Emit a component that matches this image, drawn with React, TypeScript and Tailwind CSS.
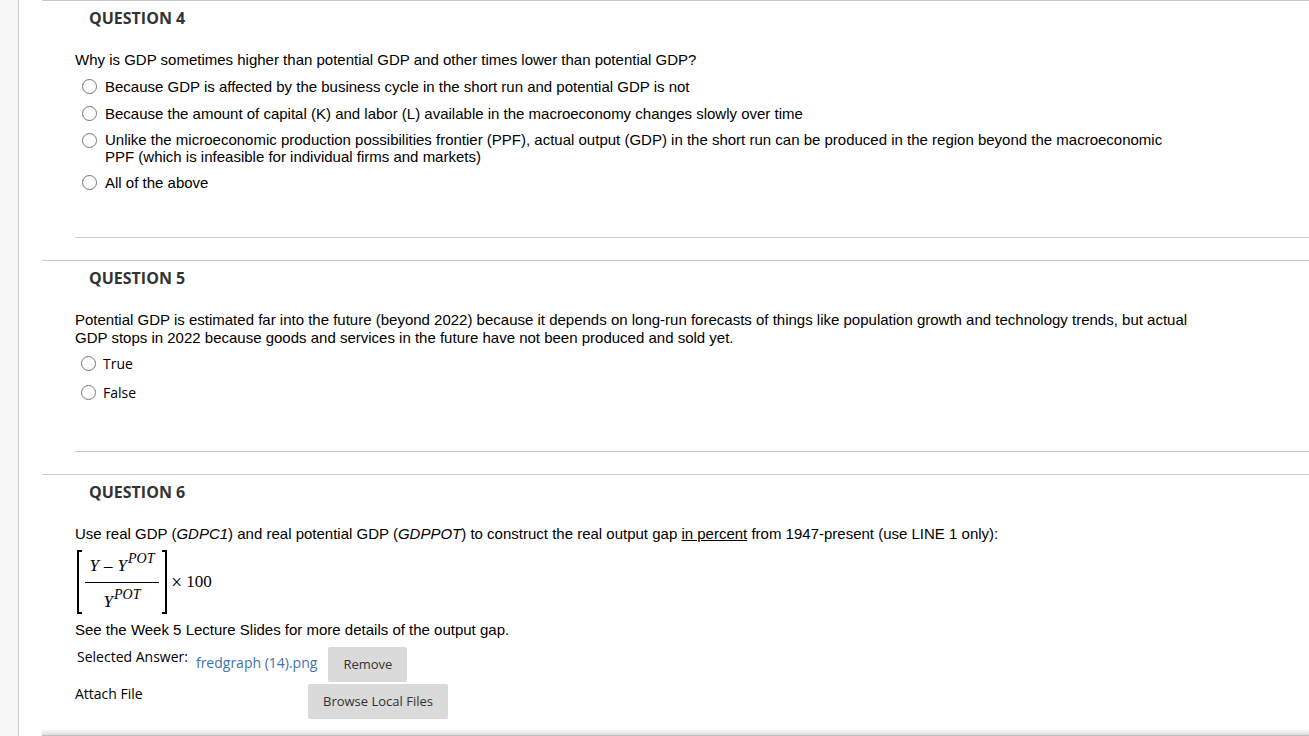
import type { ReactNode } from "react";

const Y_POT = (
  <span className="inline-flex items-start gap-px italic">
    <span className="mt-[5px]">Y</span>
    <span className="text-[14px] leading-4">POT</span>
  </span>
);

interface QuestionProps {
  number: number;
  children: ReactNode;
}

const Question = ({ number, children }: QuestionProps) => (
  <section className="border-t border-[#c9c9c9] pt-[5px]">
    <h3 className="pl-[47px] font-['Open_Sans',sans-serif] text-[16px] leading-6 font-bold text-[#333]">
      QUESTION {number}
    </h3>
    <div className="pt-[21px] pl-[33px]">{children}</div>
  </section>
);

const Prompt = ({ children }: { children: ReactNode }) => (
  <p className="pr-[118px] leading-[18px]">{children}</p>
);

const Divider = () => <hr className="mb-[22px] border-[#c9c9c9]" />;

const RADIO =
  "size-[15px] shrink-0 appearance-none rounded-full border border-[#767676] bg-white checked:border-4 checked:border-[#0075ff]";

const CHOICES = [
  "Because GDP is affected by the business cycle in the short run and potential GDP is not",
  "Because the amount of capital (K) and labor (L) available in the macroeconomy changes slowly over time",
  "Unlike the microeconomic production possibilities frontier (PPF), actual output (GDP) in the short run can be produced in the region beyond the macroeconomic PPF (which is infeasible for individual firms and markets)",
  "All of the above",
];

const BUTTON =
  "h-[35px] rounded-xs bg-[#dadada] px-[15px] pb-[2px] font-['Open_Sans',sans-serif] text-[13px] text-[#333] hover:bg-[#cdcdcd]";

const OutputGapFormula = () => (
  <div className="mt-[7px] flex h-[64px] items-center font-['Liberation_Serif',serif] text-[17px] leading-5">
    <div className="ml-[2px] w-[5px] self-stretch border-y-2 border-l-2 border-black" />
    <div className="mx-[3px] flex w-[74px] flex-col items-center">
      <div className="flex h-[32px] w-full items-start justify-center gap-[5px] border-b border-black">
        <span className="mt-[5px] italic">Y</span>
        <span className="mt-[5px]">–</span>
        {Y_POT}
      </div>
      <div className="flex h-[31px] items-start pt-1">{Y_POT}</div>
    </div>
    <div className="w-[5px] self-stretch border-y-2 border-r-2 border-black" />
    <span className="ml-1 flex items-center gap-1">
      <span className="text-[20px]">×</span>
      <span>100</span>
    </span>
  </div>
);

export default function App() {
  return (
    <div className="flex min-h-screen bg-white font-['Liberation_Sans',Arial,sans-serif] text-[15px] text-black">
      <div className="w-[19px] shrink-0 border-r border-[#c9c9c9] bg-[#f7f7f7]" />

      <main className="min-w-0 flex-1 pl-[23px]">
        <Question number={4}>
          <Prompt>
            Why is GDP sometimes higher than potential GDP and other times lower than potential GDP?
          </Prompt>
          <fieldset className="mt-1 mb-[41px] pr-[118px] pl-[7px]">
            {CHOICES.map((choice, i) => (
              <div key={choice} className="flex min-h-[27px] gap-2 py-1">
                <input id={`q4-${i}`} type="radio" name="q4" className={`mt-[2px] ${RADIO}`} />
                <label htmlFor={`q4-${i}`} className="self-center leading-[17px]">
                  {choice}
                </label>
              </div>
            ))}
          </fieldset>
          <Divider />
        </Question>

        <Question number={5}>
          <Prompt>
            Potential GDP is estimated far into the future (beyond 2022) because it depends on
            long-run forecasts of things like population growth and technology trends, but actual
            GDP stops in 2022 because goods and services in the future have not been produced and
            sold yet.
          </Prompt>
          <fieldset className="mt-[2px] mb-11 pl-[6px] font-['Open_Sans',sans-serif] text-[14px]">
            {["True", "False"].map((choice) => (
              <div key={choice} className="flex h-[29px] items-center gap-[7px]">
                <input id={`q5-${choice}`} type="radio" name="q5" className={RADIO} />
                <label htmlFor={`q5-${choice}`}>{choice}</label>
              </div>
            ))}
          </fieldset>
          <Divider />
        </Question>

        <Question number={6}>
          <Prompt>
            Use real GDP (<em>GDPC1</em>) and real potential GDP (<em>GDPPOT</em>) to construct the
            real output gap <u>in percent</u> from 1947-present (use LINE 1 only):
          </Prompt>
          <OutputGapFormula />
          <div className="mt-[7px]">
            <Prompt>See the Week 5 Lecture Slides for more details of the output gap.</Prompt>
          </div>

          <div className="mt-2 font-['Open_Sans',sans-serif] text-[14px] leading-5">
            <div className="flex pl-[2px]">
              <span>Selected Answer:</span>
              <a href="#fredgraph" className="mt-[6px] ml-2 text-[#3f73ad] hover:underline">
                fredgraph (14).png
              </a>
              <button type="button" className={`ml-[11px] ${BUTTON}`}>
                Remove
              </button>
            </div>
            <div className="mt-[2px] flex">
              <span className="w-[233px]">Attach File</span>
              <button type="button" className={BUTTON}>
                Browse Local Files
              </button>
            </div>
          </div>
        </Question>

        <div className="mt-[10px] h-[7px] border-b border-[#c0c0c0] bg-linear-to-b from-white to-[#dedede]" />
      </main>
    </div>
  );
}
